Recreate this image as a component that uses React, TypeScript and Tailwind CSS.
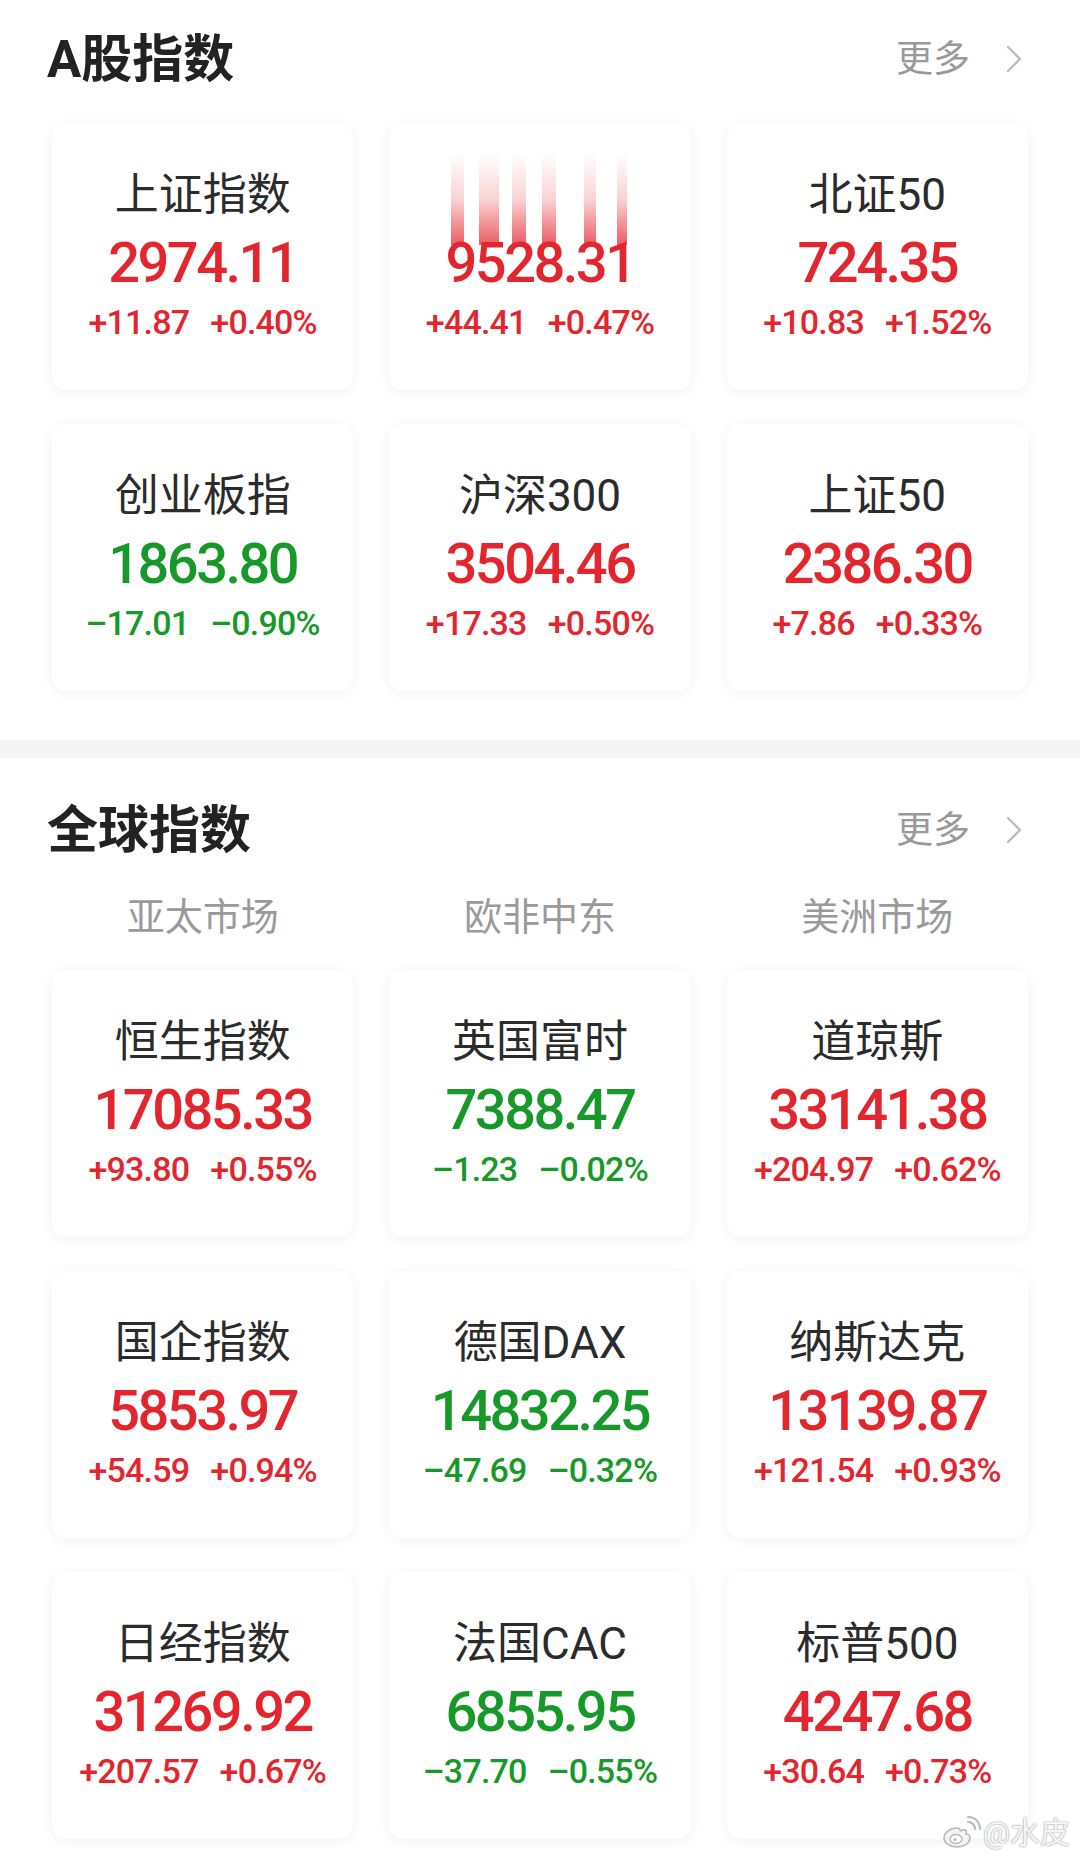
import React from "react";

type Quote = {
  name: string;
  price: string;
  change: string;
  percent: string;
  up: boolean;
  glitch?: boolean;
};

const aShares: Quote[] = [
  { name: "上证指数", price: "2974.11", change: "+11.87", percent: "+0.40%", up: true },
  { name: "", price: "9528.31", change: "+44.41", percent: "+0.47%", up: true, glitch: true },
  { name: "北证50", price: "724.35", change: "+10.83", percent: "+1.52%", up: true },
  { name: "创业板指", price: "1863.80", change: "–17.01", percent: "–0.90%", up: false },
  { name: "沪深300", price: "3504.46", change: "+17.33", percent: "+0.50%", up: true },
  { name: "上证50", price: "2386.30", change: "+7.86", percent: "+0.33%", up: true },
];

const global: Quote[] = [
  { name: "恒生指数", price: "17085.33", change: "+93.80", percent: "+0.55%", up: true },
  { name: "英国富时", price: "7388.47", change: "–1.23", percent: "–0.02%", up: false },
  { name: "道琼斯", price: "33141.38", change: "+204.97", percent: "+0.62%", up: true },
  { name: "国企指数", price: "5853.97", change: "+54.59", percent: "+0.94%", up: true },
  { name: "德国DAX", price: "14832.25", change: "–47.69", percent: "–0.32%", up: false },
  { name: "纳斯达克", price: "13139.87", change: "+121.54", percent: "+0.93%", up: true },
  { name: "日经指数", price: "31269.92", change: "+207.57", percent: "+0.67%", up: true },
  { name: "法国CAC", price: "6855.95", change: "–37.70", percent: "–0.55%", up: false },
  { name: "标普500", price: "4247.68", change: "+30.64", percent: "+0.73%", up: true },
];

// the red streaks drawn over the second card in the screenshot
const streaks = [
  { left: 62, width: 13 },
  { left: 90, width: 20 },
  { left: 123, width: 14 },
  { left: 153, width: 14 },
  { left: 195, width: 12 },
  { left: 228, width: 10 },
];

const Chevron = () => (
  <svg width="16" height="28" viewBox="0 0 16 28" fill="none">
    <polyline points="2,2 14,14 2,26" stroke="#bdbdbd" strokeWidth="2.4" strokeLinecap="round" strokeLinejoin="round" />
  </svg>
);

const SectionHeader = ({ title }: { title: string }) => (
  <div className="flex h-[48px] items-center justify-between">
    <h2 className="-ml-[5px] text-[51px] font-bold leading-none text-[#222]">{title}</h2>
    <div className="flex items-center gap-[36px] pr-[6px]">
      <span className="text-[37px] leading-none text-[#999]">更多</span>
      <Chevron />
    </div>
  </div>
);

const Card = ({ q }: { q: Quote }) => {
  const color = q.up ? "text-[#e3252e]" : "text-[#17992a]";
  return (
    <div className="relative flex h-[267px] flex-col items-center rounded-[14px] bg-white shadow-[0_2px_14px_rgba(0,0,0,0.06)]">
      <div className="mt-[50px] h-[44px] text-[44px] leading-none text-[#2b2b2b]">{q.name}</div>
      <div className={`mt-[18px] h-[56px] text-[56px] font-medium leading-none tracking-[-2.5px] ${color}`}>{q.price}</div>
      <div className={`mt-[14px] flex gap-[21px] text-[34px] font-medium leading-none tracking-[-0.8px] ${color}`}>
        <span>{q.change}</span>
        <span>{q.percent}</span>
      </div>
      {q.glitch && (
        <div className="absolute left-0 top-[30px] h-[92px] w-full">
          {streaks.map((s) => (
            <div
              key={s.left}
              className="absolute top-0 h-full bg-gradient-to-b from-[rgba(227,37,46,0)] via-[rgba(227,37,46,0.2)] to-[rgba(227,37,46,0.75)]"
              style={{ left: s.left, width: s.width }}
            />
          ))}
        </div>
      )}
    </div>
  );
};

const WeiboLogo = () => (
  <svg width="40" height="34" viewBox="0 0 40 34" fill="none">
    <path
      d="M16 12c-7 0-13 5-13 10 0 5 6 9 13 9s13-4 13-9c0-3-2-4-4-4 1-3 0-5-3-4-2 1-3 1-3 0 0-2-1-2-3-2z"
      fill="#f4f4f4"
      stroke="#b8b8b8"
      strokeWidth="1.6"
    />
    <ellipse cx="15" cy="23" rx="6" ry="4.5" fill="#fff" stroke="#b8b8b8" strokeWidth="1.4" />
    <circle cx="14" cy="23.5" r="1.6" fill="#b8b8b8" />
    <path d="M27 6c4 0 7 3 7 7" stroke="#b8b8b8" strokeWidth="2" strokeLinecap="round" />
    <path d="M27 1c7 0 12 5 12 12" stroke="#b8b8b8" strokeWidth="2" strokeLinecap="round" />
  </svg>
);

export default function App() {
  return (
    <div
      className="relative h-[1864px] w-[1080px] overflow-hidden bg-white"
      style={{ fontFamily: 'Roboto, "Noto Sans CJK SC", sans-serif' }}
    >
      <section className="px-[52px] pt-[35px]">
        <SectionHeader title="A股指数" />
        <div className="mt-[40px] grid grid-cols-3 gap-x-[36px] gap-y-[34px]">
          {aShares.map((q) => (
            <Card key={q.price} q={q} />
          ))}
        </div>
      </section>

      <div className="mt-[49px] h-[18px] bg-[#f5f5f5]" />

      <section className="px-[52px] pt-[48px]">
        <SectionHeader title="全球指数" />
        <div className="mt-[44px] grid grid-cols-3 gap-x-[36px]">
          {["亚太市场", "欧非中东", "美洲市场"].map((t) => (
            <div key={t} className="text-center text-[38px] leading-none text-[#9a9a9a]">
              {t}
            </div>
          ))}
        </div>
        <div className="mt-[34px] grid grid-cols-3 gap-x-[36px] gap-y-[34px]">
          {global.map((q) => (
            <Card key={q.price} q={q} />
          ))}
        </div>
      </section>

      <div className="absolute bottom-[14px] right-[10px] flex items-center gap-[2px]">
        <WeiboLogo />
        <span className="text-[30px] leading-none text-[#f6f6f6] [text-shadow:0_0_1px_#999,0_0_2px_#aaa]">@水皮</span>
      </div>
    </div>
  );
}
